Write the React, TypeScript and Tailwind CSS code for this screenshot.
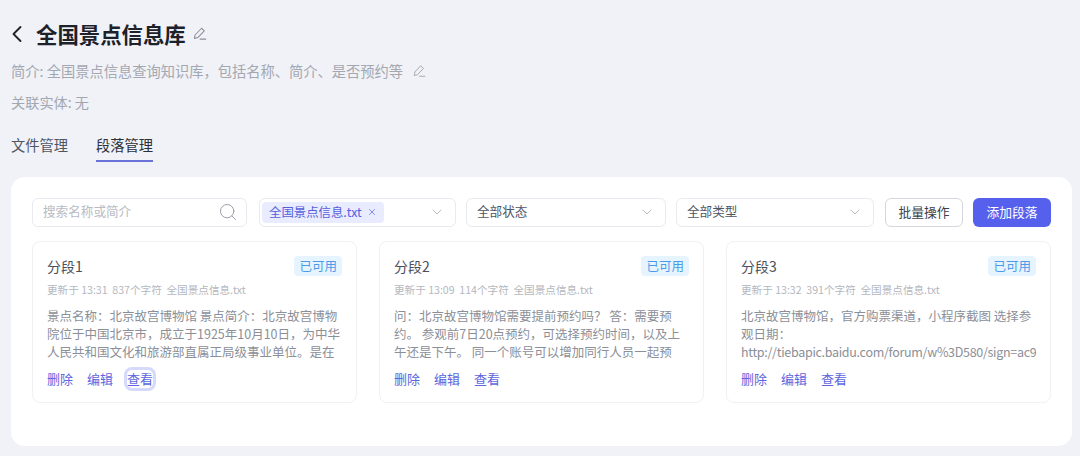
import { ChevronDown, ChevronLeft, Search, X } from "lucide-react";

const font = { fontFamily: '"Noto Sans CJK SC", "Noto Sans", sans-serif' };

const cards = [
  {
    title: "分段1",
    meta: "更新于 13:31  837个字符  全国景点信息.txt",
    lines: [
      "景点名称：北京故宫博物馆 景点简介：北京故宫博物",
      "院位于中国北京市，成立于1925年10月10日，为中华",
      "人民共和国文化和旅游部直属正局级事业单位。是在",
    ],
    focused: true,
  },
  {
    title: "分段2",
    meta: "更新于 13:09  114个字符  全国景点信息.txt",
    lines: [
      "问：北京故宫博物馆需要提前预约吗？ 答：需要预",
      "约。 参观前7日20点预约，可选择预约时间，以及上",
      "午还是下午。 同一个账号可以增加同行人员一起预",
    ],
    focused: false,
  },
  {
    title: "分段3",
    meta: "更新于 13:32  391个字符  全国景点信息.txt",
    lines: [
      "北京故宫博物馆，官方购票渠道，小程序截图 选择参",
      "观日期：",
      "http://tiebapic.baidu.com/forum/w%3D580/sign=ac9b8f2e",
    ],
    focused: false,
  },
];

function EditIcon({ className }: { className: string }) {
  return (
    <svg className={className} viewBox="0 0 16 16" fill="none" stroke="currentColor" strokeWidth={1.1} strokeLinejoin="round" strokeLinecap="round">
      <path d="M10.2 2.4l2.9 2.7-6.9 7.2-3.6.9.6-3.6z" />
      <path d="M8.6 14h6" />
    </svg>
  );
}

function SelectBox({ width, label }: { width: string; label: string }) {
  return (
    <div className={`${width} flex h-[29px] items-center justify-between rounded-md border border-[#e8eaef] bg-white pr-[10px] pb-[2px] pl-[10px]`}>
      <span className="text-[12.6px] text-[#4e5563]">{label}</span>
      <ChevronDown className="h-[16px] w-[16px] text-[#b4b8c0]" strokeWidth={1.4} />
    </div>
  );
}

export default function App() {
  return (
    <div className="h-[456px] w-[1080px] overflow-hidden bg-[#f0f2f7] pl-[11px] pr-2" style={font}>
      {/* Header */}
      <div className="flex h-[61px] items-center pt-[6px]">
        <ChevronLeft className="ml-[-8px] h-[28px] w-[28px] text-[#1f2329]" strokeWidth={1.6} />
        <h1 className="ml-[5px] text-[21.4px] leading-none font-bold text-[#1d2129]">全国景点信息库</h1>
        <EditIcon className="ml-[6px] h-[15px] w-[15px] text-[#8a8f99]" />
      </div>
      <div className="flex h-[20px] items-center text-[14.25px] leading-5 text-[#a3a7b0]">
        <span>简介: 全国景点信息查询知识库，包括名称、简介、是否预约等</span>
        <EditIcon className="ml-[9px] h-[14px] w-[14px] text-[#a3a7b0]" />
      </div>
      <div className="mt-[11px] h-[20px] text-[14.2px] leading-5 text-[#a3a7b0]">关联实体: 无</div>

      {/* Tabs */}
      <div className="mt-[20px] flex h-[30px] gap-[28px] text-[14.25px] text-[#4e5563]">
        <div className="pt-[2px]">文件管理</div>
        <div className="border-b-2 border-[#6a71d8] pt-[2px] text-[#2b303a]">段落管理</div>
      </div>

      {/* Panel */}
      <div className="mt-[15px] h-[269px] rounded-[14px] bg-white pt-[21px] pr-[21px] pl-[21px]">
        <div className="flex items-center">
          <div className="flex h-[29px] w-[215px] items-center justify-between rounded-md border border-[#e8eaef] pr-[8px] pb-[2px] pl-[10px]">
            <span className="text-[12.6px] text-[#b8bbc2]">搜索名称或简介</span>
            <Search className="h-[20px] w-[20px] text-[#9a9ea6]" strokeWidth={1.2} />
          </div>
          <div className="ml-[12px] flex h-[29px] w-[197px] items-center justify-between rounded-md border border-[#e8eaef] pr-[10px] pl-[2px]">
            <span className="flex h-[21px] items-center gap-[5px] rounded bg-[#e9ebff] pr-[7px] pb-[1px] pl-[7px] text-[12.4px] text-[#555fdc]">
              全国景点信息.txt
              <X className="h-[10px] w-[10px]" strokeWidth={1.6} />
            </span>
            <ChevronDown className="mb-[2px] h-[16px] w-[16px] text-[#b4b8c0]" strokeWidth={1.4} />
          </div>
          <SelectBox width="ml-[10px] w-[200px]" label="全部状态" />
          <SelectBox width="ml-[10px] w-[198px]" label="全部类型" />
          <button className="ml-[11px] h-[29px] w-[78px] rounded-md border border-[#d4d6dc] bg-white pb-[2px] text-[12.8px] text-[#3a3f4a]">批量操作</button>
          <button className="ml-[10px] h-[29px] w-[78px] rounded-md bg-[#5560ec] pb-[2px] text-[12.8px] text-white">添加段落</button>
        </div>

        <div className="mt-[14px] grid w-[1019px] grid-cols-3 gap-[22px]">
          {cards.map((card) => (
            <div key={card.title} className="h-[162px] rounded-lg border border-[#f0f1f4] pt-[12px] pr-[14px] pl-[14px]">
              <div className="flex h-[24px] items-center justify-between">
                <span className="text-[14px] text-[#4a4f5a]">{card.title}</span>
                <span className="flex h-[20px] items-center rounded bg-[#e6f4ff] px-[5px] text-[12.5px] text-[#4c9be8]">已可用</span>
              </div>
              <div className="mt-[5px] h-[14px] text-[10.6px] leading-[14px] whitespace-pre text-[#b4b7be]">{card.meta}</div>
              <div className="mt-[10px] overflow-hidden text-[12.5px] leading-[18px] whitespace-nowrap text-[#8b8f98]">
                {card.lines.map((line) => (
                  <div key={line} className={line.startsWith("http") ? "tracking-[-0.3px]" : ""}>
                    {line}
                  </div>
                ))}
              </div>
              <div className="mt-[9px] flex gap-[14px] text-[13px] leading-[18px] text-[#5c66dd]">
                <span>删除</span>
                <span>编辑</span>
                <span className={card.focused ? "rounded-[5px] shadow-[0_0_0_3px_#d5d9fb]" : ""}>查看</span>
              </div>
            </div>
          ))}
        </div>
      </div>
    </div>
  );
}
